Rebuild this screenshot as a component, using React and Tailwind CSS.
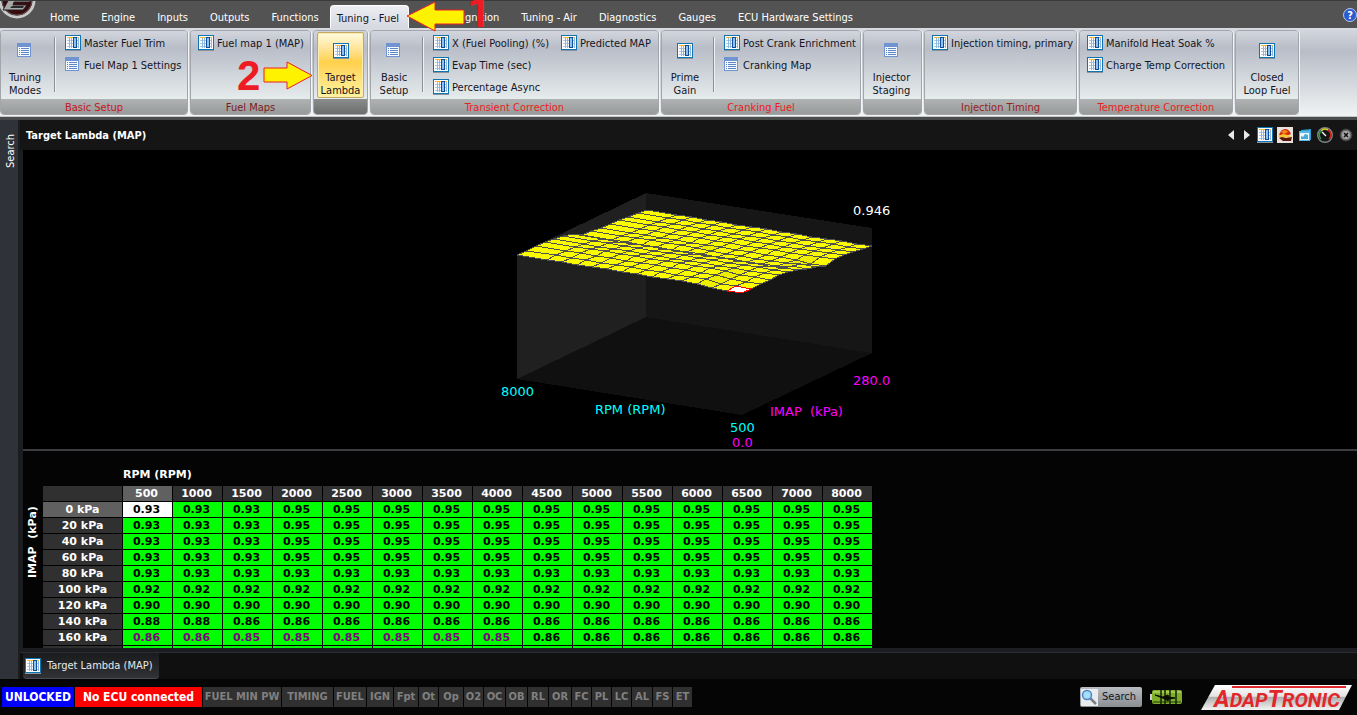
const tabs = [
    "Home",
    "Engine",
    "Inputs",
    "Outputs",
    "Functions",
    "Tuning - Fuel",
    "Tuning - Ignition",
    "Tuning - Air",
    "Diagnostics",
    "Gauges",
    "ECU Hardware Settings",
];

const groups = [
    {
        title: "Basic Setup",
        titleClass: "text-[#c4161c]",
        width: "w-[188px]",
        big: { icon: "list", lines: ["Tuning", "Modes"], width: "w-11" },
        columns: [[["map", "Master Fuel Trim"], ["list", "Fuel Map 1 Settings"]]],
    },
    {
        title: "Fuel Maps",
        titleClass: "text-[#7a1c1c]",
        width: "w-[121px]",
        columns: [[["map", "Fuel map 1 (MAP)"]]],
    },
    {
        title: "",
        dark: true,
        width: "w-[55px]",
        big: { icon: "map", lines: ["Target", "Lambda"], width: "w-[47px]", active: true },
    },
    {
        title: "Transient Correction",
        titleClass: "text-[#ed1c24]",
        width: "w-[289px]",
        big: { icon: "list", lines: ["Basic", "Setup"], width: "w-[42px]" },
        columns: [
            [["map", "X (Fuel Pooling) (%)"], ["map", "Evap Time (sec)"], ["map", "Percentage Async"]],
            [["map", "Predicted MAP"]],
        ],
    },
    {
        title: "Cranking Fuel",
        titleClass: "text-[#ed1c24]",
        width: "w-[200px]",
        big: { icon: "map", lines: ["Prime", "Gain"], width: "w-[42px]" },
        columns: [[["map", "Post Crank Enrichment"], ["list", "Cranking Map"]]],
    },
    {
        title: "",
        width: "w-[59px]",
        big: { icon: "list", lines: ["Injector", "Staging"], width: "w-[51px]" },
    },
    {
        title: "Injection Timing",
        titleClass: "text-[#9c1c1c]",
        width: "w-[153px]",
        columns: [[["map", "Injection timing, primary"]]],
    },
    {
        title: "Temperature Correction",
        titleClass: "text-[#ed1c24]",
        width: "w-[154px]",
        columns: [[["map", "Manifold Heat Soak %"], ["map", "Charge Temp Correction"]]],
    },
    {
        title: "",
        width: "w-[64px]",
        big: { icon: "map", lines: ["Closed", "Loop Fuel"], width: "w-[58px]" },
    },
];

const rpms = [500, 1000, 1500, 2000, 2500, 3000, 3500, 4000, 4500, 5000, 5500, 6000, 6500, 7000, 8000];

const fill = (head, rest) => rpms.map((_, i) => (i < head.length ? head[i] : rest));

const lambda = [
    fill([0.93, 0.93, 0.93], 0.95),
    fill([0.93, 0.93, 0.93], 0.95),
    fill([0.93, 0.93, 0.93], 0.95),
    fill([0.93, 0.93, 0.93], 0.95),
    fill([], 0.93),
    fill([], 0.92),
    fill([], 0.9),
    fill([0.88, 0.88], 0.86),
    fill([0.86, 0.86, 0.85, 0.85, 0.85, 0.85, 0.85, 0.85], 0.86),
    fill([0.83, 0.83, 0.84], 0.847),
    fill([0.855, 0.85], 0.845),
    fill([0.85, 0.845], 0.84),
    fill([0.84, 0.835], 0.832),
    fill([], 0.825),
    fill([], 0.815),
];

const indicators = [
    ["FUEL MIN PW", "w-[78px]"],
    ["TIMING", "w-[51px]"],
    ["FUEL", "w-8"],
    ["IGN", "w-[26px]"],
    ["Fpt", "w-6"],
    ["Ot", "w-[19px]"],
    ["Op", "w-6"],
    ["O2", "w-[19px]"],
    ["OC", "w-[21px]"],
    ["OB", "w-[21px]"],
    ["RL", "w-5"],
    ["OR", "w-[22px]"],
    ["FC", "w-[19px]"],
    ["PL", "w-[19px]"],
    ["LC", "w-[19px]"],
    ["AL", "w-5"],
    ["FS", "w-[19px]"],
    ["ET", "w-[19px]"],
];

function MapIcon() {
    return (
        <svg width="16" height="16" viewBox="0 0 16 16" className="shrink-0" shapeRendering="crispEdges" aria-hidden="true">
            <rect width="16" height="15" fill="#0f74b0" />
            <rect x="1" y="1" width="14" height="13" fill="#fff" />
            <rect x="2" y="2" width="12" height="1" fill="#f5b83d" />
            <path d="M2 5.500h12M2 8.500h12M2 11.500h12" stroke="#a9c6e2" />
            <path d="M4.500 3v10M6.500 3v10M13.500 3v10" stroke="#8fb6dc" />
            <rect x="8" y="2" width="4" height="11" fill="#0d4f9a" />
            <rect x="9" y="3" width="2" height="9" fill="#8fc0f0" />
            <rect y="15" width="16" height="1" fill="#8d939c" />
        </svg>
    );
}

function ListIcon() {
    return (
        <svg width="16" height="16" viewBox="0 0 16 16" className="shrink-0" shapeRendering="crispEdges" aria-hidden="true">
            <rect width="14" height="14" fill="#6f94cf" />
            <rect x="1" y="4" width="12" height="9" fill="#f4f8ff" />
            <path d="M2 5.500h1M2 7.500h1M2 9.500h1M2 11.500h1M4 5.500h8M4 7.500h8M4 9.500h8M4 11.500h8" stroke="#5f87c6" />
        </svg>
    );
}

function Icon({ name }) {
    return name === "map" ? <MapIcon /> : <ListIcon />;
}

function BigButton({ icon, lines, width, active }) {
    return (
        <button
            type="button"
            className={`flex h-[66px] shrink-0 flex-col items-center ${width} ${
                active
                    ? "ml-px rounded-xs border border-[#c2a860] bg-linear-to-b from-[#fffbe0] from-0% via-[#ffd04a] via-45% to-[#fff3a0] pt-[10px] shadow-[inset_0_0_0_1px_#fdeeb0]"
                    : "pt-[11px]"
            }`}
        >
            <Icon name={icon} />
            <span className="mt-3 text-center leading-[13px] whitespace-nowrap">
                {lines[0]}
                <br />
                {lines[1]}
            </span>
        </button>
    );
}

function Group({ title, titleClass, width, big, columns, dark }) {
    return (
        <section
            className={`flex h-[85px] shrink-0 flex-col overflow-hidden rounded-[4px] border border-[#a2a5a9] shadow-[1px_0_0_#f4f5f6] ${width}`}
        >
            <div className="flex min-h-0 flex-1 bg-linear-to-b from-[#d3d6dd] from-0% via-[#b8bdc8] via-25% to-[#e6ecec] px-[2px] pt-px">
                {big && <BigButton {...big} />}
                {big && columns && (
                    <div className="mt-[5px] ml-[7px] h-[55px] w-px shrink-0 bg-[#8c9096] shadow-[1px_0_0_#eef0f2]" />
                )}
                {columns && (
                    <div className={`flex gap-3 ${big ? "ml-[10px]" : "ml-[5px]"}`}>
                        {columns.map((items) => (
                            <div key={items[0][1]} className="flex flex-col">
                                {items.map(([icon, label]) => (
                                    <button
                                        key={label}
                                        type="button"
                                        className="flex h-[22px] items-center gap-[3px] whitespace-nowrap"
                                    >
                                        <Icon name={icon} />
                                        <span className="pt-[2px]">{label}</span>
                                    </button>
                                ))}
                            </div>
                        ))}
                    </div>
                )}
            </div>
            <h2
                className={`h-[15px] shrink-0 pt-px text-center leading-[15px] ${titleClass || ""} ${
                    dark ? "bg-linear-to-b from-[#8b8d8d] to-[#6b6d6d]" : "bg-linear-to-b from-[#b0b3b3] to-[#979a99]"
                }`}
            >
                {title}
            </h2>
        </section>
    );
}

// Axonometric projection of one map point, height measured from zero lambda.
function project(rpm, kpa, value) {
    const u = (rpm - 500) / 7500;
    const v = kpa / 280;
    const z = (Math.min(value, 0.946) / 0.946) * 124;
    return [242 - 225 * u + 130 * v, 265 - 36 * u - 62 * v - z];
}

function Surface() {
    const cells = [];
    // far cells first so that near ones cover them
    for (let r = 13; r >= 0; r--) {
        for (let c = 13; c >= 0; c--) {
            const corners = [
                [r, c],
                [r, c + 1],
                [r + 1, c + 1],
                [r + 1, c],
            ].map(([i, j]) => project(rpms[j], i * 20, lambda[i][j]).map(Math.round).join(","));
            cells.push({
                key: `${r}-${c}`,
                points: corners.join(" "),
                selected: r === 0 && c === 0,
                shaded: Math.abs(lambda[r][c] - lambda[r][c + 1]) > 0.009,
            });
        }
    }
    return (
        <svg
            width="400"
            height="275"
            viewBox="0 0 400 275"
            role="img"
            aria-label="Target lambda surface"
            shapeRendering="crispEdges"
        >
            <polygon points="17,105 146,43 146,167 17,229" fill="#202020" />
            <polygon points="146,43 372,78 372,203 146,167" fill="#161616" />
            <polygon points="17,229 146,167 372,203 242,265" fill="#101010" />
            {cells.map((cell) => (
                <polygon
                    key={cell.key}
                    points={cell.points}
                    fill={cell.selected ? "#ffffff" : cell.shaded ? "#eeee00" : "#fbfb00"}
                    stroke={cell.selected ? "#ff0000" : "#505050"}
                />
            ))}
        </svg>
    );
}

function SurfaceLabel({ className, children }) {
    return <span className={`absolute text-[13px] leading-4 whitespace-pre ${className}`}>{children}</span>;
}

function LambdaTable() {
    const head = "border-r border-b border-black text-center font-bold text-white";
    return (
        <table className="w-[830px] table-fixed border-separate border-spacing-0 text-[11px] leading-[15px]">
            <thead>
                <tr>
                    <th className="h-4 w-20 border-r border-b border-black bg-[#303030] p-0" aria-label="IMAP (kPa)" />
                    {rpms.map((rpm, i) => (
                        <th key={rpm} scope="col" className={`h-4 w-[50px] p-0 pr-[2px] ${head} ${i === 0 ? "bg-[#606060]" : "bg-[#303030]"}`}>
                            {rpm}
                        </th>
                    ))}
                </tr>
            </thead>
            <tbody>
                {lambda.slice(0, 10).map((row, r) => (
                    <tr key={r}>
                        <th scope="row" className={`h-4 p-0 ${head} ${r === 0 ? "bg-[#606060]" : "bg-[#303030]"}`}>
                            {r * 20} kPa
                        </th>
                        {row.map((value, c) => (
                            <td
                                key={c}
                                className={`h-4 border-r border-b border-black p-0 pr-[2px] text-center font-bold ${
                                    r === 0 && c === 0 ? "bg-white" : "bg-[#00ff00]"
                                } ${r === 8 && c < 8 ? "text-[#800080]" : "text-black"}`}
                            >
                                {value.toFixed(2)}
                            </td>
                        ))}
                    </tr>
                ))}
            </tbody>
        </table>
    );
}

function AppLogo() {
    return (
        <svg width="39" height="28" viewBox="0 0 39 28" className="shrink-0" aria-hidden="true">
            <circle cx="17" cy="-1" r="17" fill="#3a0a0e" stroke="#c9c9c9" strokeWidth="3" />
            <circle cx="17" cy="-1" r="15" fill="none" stroke="#5a5a5a" />
            <path d="M9 -2h22l-1 3H14l-1 3h14l-4 5H3z" fill="#a9a9a9" stroke="#222" />
            <path d="M12 5h12l-1 2H10z" fill="#2a2a2a" />
        </svg>
    );
}

function HelpIcon() {
    return (
        <svg width="14" height="14" viewBox="0 0 14 14" aria-hidden="true">
            <circle cx="7" cy="7" r="6.500" fill="#2a5bd0" stroke="#b9c8ee" />
            <text x="7" y="11" textAnchor="middle" fontSize="11" fontWeight="bold" fill="#fff">?</text>
        </svg>
    );
}

function PanelTools() {
    return (
        <div className="flex items-center gap-1">
            <button type="button" aria-label="Previous" className="flex w-3 justify-center">
                <svg width="6" height="10" viewBox="0 0 6 10"><path d="M6 0v10L0 5z" fill="#e8e8e8" /></svg>
            </button>
            <button type="button" aria-label="Next" className="flex w-3 justify-center">
                <svg width="6" height="10" viewBox="0 0 6 10"><path d="M0 0v10l6-5z" fill="#e8e8e8" /></svg>
            </button>
            <button type="button" aria-label="Table"><MapIcon /></button>
            <button type="button" aria-label="Surface">
                <svg width="16" height="16" viewBox="0 0 16 16">
                    <rect width="16" height="16" fill="#e9e2dc" />
                    <path d="M2 8q2-6 6-6 4 0 6 5l-5 2z" fill="#d42a0c" />
                    <path d="M4 5q4-4 7 0l-4 2z" fill="#f28a1c" />
                    <path d="M1 9l5-2 5 1 3 1-2 2-5-1-3 1z" fill="#f7c331" />
                    <path d="M2 11l3-1 4 1 6-1-1 4H6z" fill="#5a1608" />
                </svg>
            </button>
            <button type="button" aria-label="Windows">
                <svg width="16" height="16" viewBox="0 0 16 16">
                    <path d="M4 3l10-1v11H4z" fill="#2e9ed6" />
                    <rect x="2.500" y="4.500" width="10" height="9" fill="#e6f6fd" stroke="#54b9e8" />
                    <path d="M2 5h11" stroke="#54b9e8" strokeWidth="2" />
                    <path d="M4 12V9l2 1 2-3 3 1v4z" fill="#4ba8d6" />
                </svg>
            </button>
            <button type="button" aria-label="Gauge">
                <svg width="16" height="16" viewBox="0 0 16 16">
                    <circle cx="8" cy="8" r="7.300" fill="#161616" stroke="#858585" strokeWidth="1.400" />
                    <path d="M4 12a5.500 5.500 0 0 1 0-8" fill="none" stroke="#1ea63a" strokeWidth="1.500" />
                    <path d="M4 4a5.500 5.500 0 0 1 7-1" fill="none" stroke="#d8cf2a" strokeWidth="1.500" />
                    <path d="M11 3a5.500 5.500 0 0 1 1 9" fill="none" stroke="#d8261c" strokeWidth="1.500" />
                    <path d="M9 9L5 5" stroke="#fff" strokeWidth="1.300" />
                </svg>
            </button>
            <button type="button" aria-label="Close" className="ml-[2px]">
                <svg width="14" height="14" viewBox="0 0 14 14">
                    <circle cx="7" cy="7" r="6" fill="#6a6a6a" stroke="#3a3a3a" />
                    <circle cx="7" cy="7" r="4" fill="#aaa" />
                    <path d="M5 5l4 4M9 5l-4 4" stroke="#111" strokeWidth="1.600" />
                </svg>
            </button>
        </div>
    );
}

function Brand() {
    return (
        <svg width="153" height="27" viewBox="0 0 153 27" role="img" aria-label="Adaptronic">
            <defs>
                <linearGradient id="plate" x1="0" y1="0" x2="0" y2="1">
                    <stop offset="0" stopColor="#ffffff" />
                    <stop offset=".45" stopColor="#e4e4e4" />
                    <stop offset=".5" stopColor="#b0b0b0" />
                    <stop offset="1" stopColor="#f4f4f4" />
                </linearGradient>
            </defs>
            <path d="M15 1h137l-13 25H1z" fill="url(#plate)" />
            <path d="M32 3h114" stroke="#e0282c" strokeWidth="2" />
            <text
                x="14"
                y="23"
                fill="#e0282c"
                fontFamily="Roboto,'Liberation Sans',sans-serif"
                fontSize="20"
                fontWeight="bold"
                fontStyle="italic"
            >
                <tspan fontSize="24">A</tspan>DAP<tspan fontSize="24">T</tspan>RONIC
            </text>
        </svg>
    );
}

// Red numbered arrows that lie over the ribbon.
function Callouts() {
    return (
        <div className="pointer-events-none absolute top-0 left-0 text-[42px] leading-[42px] font-bold text-[#ed1c24]">
            <svg width="520" height="100" viewBox="0 0 520 100" className="absolute top-0 left-0" aria-hidden="true">
                <path d="M407 16L435 2v8h29v14h-29v7z" fill="#fff200" stroke="#ed1c24" />
                <path d="M264 68h23v-6l25 13.500L287 89v-7h-23z" fill="#fff200" stroke="#ed1c24" />
            </svg>
            <span className="absolute -top-2 left-[467px] font-['Roboto',sans-serif]">1</span>
            <span className="absolute top-[55px] left-[237px] font-['Liberation_Sans',sans-serif]">2</span>
        </div>
    );
}

export default function App() {
    return (
        <div className="relative flex h-screen flex-col overflow-hidden bg-[#050505] font-['DejaVu_Sans_Condensed','DejaVu_Sans',sans-serif] text-[11px] text-[#15151f]">
            <header className="flex h-7 shrink-0 border-t border-[#3a3a3a] bg-[#535353]">
                <AppLogo />
                <nav className="flex flex-1 items-end">
                    {tabs.map((tab) => (
                        <button
                            key={tab}
                            type="button"
                            className={`h-[23px] pt-1 whitespace-nowrap ${
                                tab === "Tuning - Fuel"
                                    ? "rounded-t-sm border border-b-0 border-white bg-linear-to-b from-[#eceef3] to-[#d5d8e0] pr-[9px] pl-[6px]"
                                    : "px-[11px] text-white"
                            }`}
                        >
                            {tab}
                        </button>
                    ))}
                </nav>
                <button type="button" aria-label="Help" className="flex items-center">
                    <HelpIcon />
                </button>
            </header>

            <div className="flex h-[88px] shrink-0 gap-[2px] border-t-2 border-[#d7dae2] bg-linear-to-b from-[#d3d6dd] from-0% via-[#b8bdc8] via-25% to-[#f1f4f4]">
                {groups.map((group, i) => (
                    <Group key={i} {...group} />
                ))}
            </div>
            <div className="h-1 shrink-0 border-t border-[#c4c6c8] bg-[#4a4c4c]" />

            <div className="flex min-h-0 flex-1">
                <aside className="w-5 shrink-0 border-r-2 border-[#1c1d20] bg-[#2f3238] pt-[14px]">
                    <button
                        type="button"
                        className="ml-[3px] w-4 rotate-180 leading-4 text-white [writing-mode:vertical-rl]"
                    >
                        Search
                    </button>
                </aside>
                <main className="flex min-w-0 flex-1 flex-col bg-[#101010]">
                    <div className="flex h-[30px] shrink-0 items-center justify-between bg-[#151515] pr-1 pl-[6px]">
                        <h1 className="pt-[2px] font-bold text-white">Target Lambda (MAP)</h1>
                        <PanelTools />
                    </div>
                    <div className="flex min-h-0 flex-1 flex-col border-l-3 border-[#1c1d20] bg-[#040404] font-['DejaVu_Sans',sans-serif]">
                        <div className="flex h-[301px] shrink-0 justify-center border-b-2 border-[#3d3d41] bg-black">
                            <div className="relative mr-[-20px] w-[400px]">
                                <Surface />
                                <SurfaceLabel className="top-[53px] left-[353px] text-white">0.946</SurfaceLabel>
                                <SurfaceLabel className="top-[223px] left-[353px] text-[#ff00ff]">280.0</SurfaceLabel>
                                <SurfaceLabel className="top-[234px] left-px text-[#00ffff]">8000</SurfaceLabel>
                                <SurfaceLabel className="top-[252px] left-[95px] text-[#00ffff]">RPM (RPM)</SurfaceLabel>
                                <SurfaceLabel className="top-[254px] left-[270px] text-[#ff00ff]">IMAP  (kPa)</SurfaceLabel>
                                <SurfaceLabel className="top-[270px] left-[230px] text-[#00ffff]">500</SurfaceLabel>
                                <SurfaceLabel className="top-[285px] left-[232px] text-[#ff00ff]">0.0</SurfaceLabel>
                            </div>
                        </div>
                        <div className="flex min-h-0 flex-1 overflow-hidden pt-4 text-[11px] font-bold text-white">
                            <div className="w-5 shrink-0 rotate-180 pt-[31px] text-center leading-5 whitespace-pre [writing-mode:vertical-rl]">
                                IMAP  (kPa)
                            </div>
                            <div>
                                <div className="h-[19px] pl-20 leading-4">RPM (RPM)</div>
                                <LambdaTable />
                            </div>
                        </div>
                    </div>
                    <div className="h-[5px] shrink-0 border-b border-[#2a2d33] bg-[#1c1d20]" />
                    <div className="flex h-[26px] shrink-0 pl-[3px]">
                        <button
                            type="button"
                            className="flex items-center gap-[6px] rounded-b-sm border-b border-[#4a4d52] bg-linear-to-b from-[#1a1b1d] to-[#303236] pr-[6px] pl-[2px] text-[#e8e8e8]"
                        >
                            <MapIcon />
                            <span className="pt-px">Target Lambda (MAP)</span>
                        </button>
                    </div>
                </main>
            </div>

            <footer className="flex h-9 shrink-0 items-center justify-between bg-[#050505] pr-1 pl-[2px]">
                <div className="flex gap-px leading-5 font-bold whitespace-nowrap text-white">
                    <span className="w-[72px] bg-[#0000ff] text-center text-[12px] leading-5">UNLOCKED</span>
                    <span className="w-[127px] bg-[#ff0000] text-center text-[12px] leading-5">No ECU connected</span>
                    {indicators.map(([label, width]) => (
                        <span key={label} className={`bg-[#303030] text-center text-[#808080] ${width}`}>
                            {label}
                        </span>
                    ))}
                </div>
                <div className="flex items-center">
                    <button
                        type="button"
                        className="flex h-5 w-[62px] items-center gap-1 rounded-xs bg-linear-to-b from-[#b9bdc2] to-[#8b8f94] pl-px"
                    >
                        <svg width="17" height="17" viewBox="0 0 17 17" aria-hidden="true">
                            <rect width="17" height="17" fill="#e9ecef" />
                            <path d="M9 9l6 6" stroke="#7b7f86" strokeWidth="2.500" />
                            <circle cx="6" cy="6" r="4.500" fill="#a6dcf8" stroke="#4a86c8" strokeWidth="1.500" />
                        </svg>
                        <span className="pt-px">Search</span>
                    </button>
                    <svg width="32" height="14" viewBox="0 0 32 14" className="mx-2" aria-hidden="true">
                        <rect x="0" y="4" width="4" height="6" fill="#c9ccd0" />
                        <rect x="2" y="0" width="30" height="14" rx="2" fill="#7fae2a" />
                        <path d="M3 2h28" stroke="#c6e37a" />
                        <path d="M3 12h28" stroke="#4f7415" strokeWidth="2" />
                        <path d="M11 0v14M15 0v14M20 0v14M26 0v14" stroke="#14200a" strokeWidth="1.500" />
                        <path d="M5 5l8 2 5-2 1 2 6 1-6 1-1 2-3-2z" fill="#0a0f04" stroke="#0a0f04" />
                    </svg>
                    <div className="ml-[10px]">
                        <Brand />
                    </div>
                </div>
            </footer>
            <Callouts />
        </div>
    );
}
